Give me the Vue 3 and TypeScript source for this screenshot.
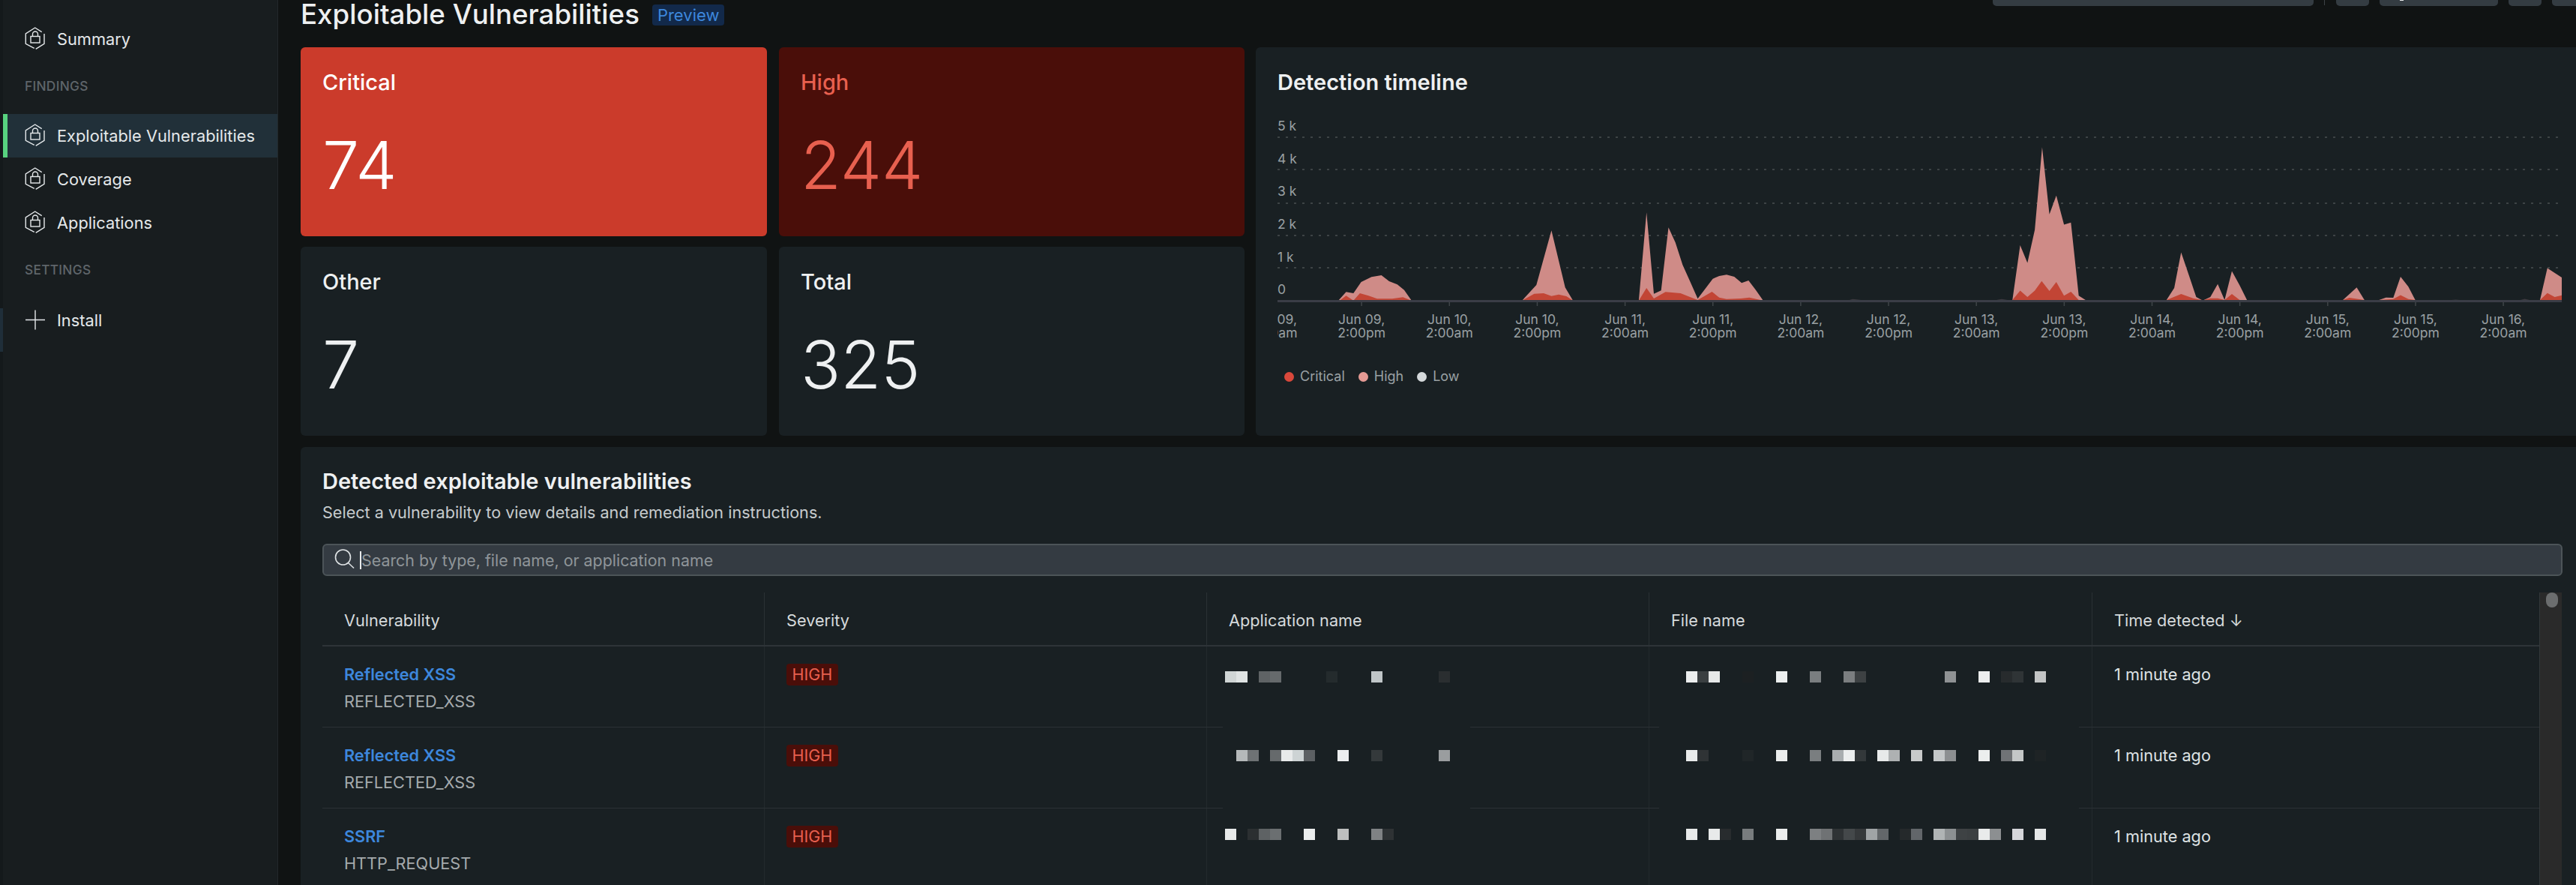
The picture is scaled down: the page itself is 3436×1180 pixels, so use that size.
<script setup lang="ts">
type Point = [number, number]
type Block = [number, string]

const navTop = ['Summary']
const navFindings = ['Exploitable Vulnerabilities', 'Coverage', 'Applications']

const stats = [
  { label: 'Critical', value: 74, tone: 'critical' },
  { label: 'High', value: 244, tone: 'high' },
  { label: 'Other', value: 7, tone: '' },
  { label: 'Total', value: 325, tone: '' },
]

const yLabels = [
  { text: '5 k', y: 174 },
  { text: '4 k', y: 218 },
  { text: '3 k', y: 261 },
  { text: '2 k', y: 305 },
  { text: '1 k', y: 349 },
  { text: '0', y: 392 },
]
const gridLines = [183, 226, 271, 314, 357]

const tickDates = [
  ['Jun 09,', '2:00am'], ['Jun 09,', '2:00pm'], ['Jun 10,', '2:00am'], ['Jun 10,', '2:00pm'],
  ['Jun 11,', '2:00am'], ['Jun 11,', '2:00pm'], ['Jun 12,', '2:00am'], ['Jun 12,', '2:00pm'],
  ['Jun 13,', '2:00am'], ['Jun 13,', '2:00pm'], ['Jun 14,', '2:00am'], ['Jun 14,', '2:00pm'],
  ['Jun 15,', '2:00am'], ['Jun 15,', '2:00pm'], ['Jun 16,', '2:00am'],
]
const ticks = tickDates.map((lines, i) => ({ lines, x: 1700 + i * 117.15 }))

// shapes were read off two crops of the chart, so each set has its own scale
const left = (pts: Point[]) => pts.map(([x, y]) => `${(1680 + x / 1.742).toFixed(1)},${(60 + y / 3).toFixed(1)}`).join(' ')
const right = (pts: Point[]) => pts.map(([x, y]) => `${(2536 + x / 1.742).toFixed(1)},${(y / 2.904).toFixed(1)}`).join(' ')

const highAreas = [
  left([[185, 1022], [203, 988], [220, 993], [238, 948], [262, 928], [285, 921], [303, 945], [322, 958], [338, 980], [355, 1022]]),
  left([[612, 1022], [645, 960], [680, 742], [712, 970], [730, 1022]]),
  left([[883, 1022], [901, 670], [918, 995], [935, 982], [952, 730], [968, 790], [985, 880], [1002, 945], [1020, 1015], [1055, 935], [1070, 924], [1087, 919], [1105, 927], [1122, 952], [1138, 942], [1155, 980], [1172, 1022]]),
  right([[260, 1162], [278, 950], [295, 1018], [312, 890], [329, 570], [346, 830], [362, 757], [380, 870], [396, 862], [414, 1145], [430, 1162]]),
  right([[618, 1162], [636, 1115], [652, 977], [670, 1065], [687, 1150], [700, 1162]]),
  right([[705, 1162], [720, 1150], [737, 1100], [753, 1162], [770, 1050], [788, 1105], [805, 1162]]),
  right([[1028, 1162], [1060, 1113], [1078, 1162]]),
  right([[1112, 1162], [1128, 1152], [1145, 1153], [1162, 1072], [1180, 1110], [1196, 1162]]),
  right([[1486, 1162], [1503, 1038], [1537, 1075], [1537, 1162]]),
]
const criticalAreas = [
  left([[188, 1022], [203, 1003], [220, 1022], [235, 993], [255, 1003], [275, 1015], [310, 1015], [335, 1009], [355, 1022]]),
  left([[612, 1022], [640, 995], [662, 993], [680, 1004], [697, 998], [715, 1005], [730, 1022]]),
  left([[883, 1022], [901, 972], [918, 1014], [945, 988], [980, 993], [1002, 1008], [1020, 1020], [1053, 987], [1070, 1010], [1087, 1016], [1120, 1014], [1140, 1010], [1172, 1022]]),
  right([[260, 1162], [278, 1125], [295, 1150], [312, 1125], [328, 1088], [346, 1127], [362, 1092], [380, 1145], [396, 1130], [414, 1162]]),
  right([[618, 1162], [652, 1138], [680, 1155], [700, 1162]]),
  right([[705, 1162], [720, 1155], [737, 1155], [753, 1162], [770, 1138], [788, 1162]]),
  right([[1028, 1162], [1043, 1153], [1078, 1162]]),
  right([[1112, 1162], [1145, 1158], [1162, 1143], [1180, 1158], [1196, 1162]]),
  right([[1486, 1162], [1503, 1135], [1520, 1150], [1537, 1143], [1537, 1162]]),
]
const lowAreas = [
  left([[1365, 1024], [1380, 1016], [1420, 1024]]),
  right([[215, 1164], [235, 1158], [258, 1164]]),
  right([[1265, 1164], [1290, 1160], [1315, 1164]]),
  right([[1436, 1164], [1450, 1157], [1468, 1164]]),
]

const legend = [
  { label: 'Critical', color: '#d9483b' },
  { label: 'High', color: '#e59a94' },
  { label: 'Low', color: '#d5d9db' },
]

const columns = ['Vulnerability', 'Severity', 'Application name', 'File name', 'Time detected ↓']

const rows: { name: string; type: string; top: number; app: Block[]; file: Block[] }[] = [
  {
    name: 'Reflected XSS',
    type: 'REFLECTED_XSS',
    top: 33,
    app: [[0, '#d0d5d5'], [1, '#dfe3e3'], [3, '#5f6365'], [4, '#666a6c'], [9, '#242b2d'], [13, '#c0c6c8'], [19, '#2a2e30']],
    file: [[0, '#eceeee'], [1, '#3a3f41'], [2, '#e6e8e8'], [5, '#1c2022'], [8, '#ecefef'], [11, '#7a7e80'], [14, '#7b7e80'], [15, '#3d4143'], [23, '#8f9294'], [26, '#eceeee'], [28, '#272b2d'], [29, '#2f3436'], [31, '#c3c5c5']],
  },
  {
    name: 'Reflected XSS',
    type: 'REFLECTED_XSS',
    top: 30,
    app: [[1, '#b5b9ba'], [2, '#6e7274'], [4, '#666a6c'], [5, '#e8eaea'], [6, '#cdd3d4'], [7, '#5c6063'], [10, '#eceeef'], [13, '#34393b'], [19, '#9a9d9f']],
    file: [[0, '#e9ebeb'], [1, '#2f3335'], [5, '#202628'], [8, '#ebeded'], [11, '#7a7e80'], [13, '#a9adaf'], [14, '#eceeee'], [15, '#33383a'], [17, '#e8eaea'], [18, '#aeb1b2'], [20, '#c8caca'], [22, '#c4c7c8'], [23, '#8c8f91'], [26, '#eceeee'], [28, '#707376'], [29, '#c4c7c7'], [31, '#1e2325']],
  },
  {
    name: 'SSRF',
    type: 'HTTP_REQUEST',
    top: 27,
    app: [[0, '#e8eaea'], [2, '#2b2f31'], [3, '#5e6264'], [4, '#6b6f71'], [7, '#ebeded'], [10, '#bdbfbf'], [13, '#7f8284'], [14, '#2e3234']],
    file: [[0, '#e8eaea'], [2, '#e8eaea'], [3, '#282c2e'], [5, '#787c7e'], [8, '#ebeded'], [11, '#7d8082'], [12, '#6f7274'], [13, '#2f3335'], [14, '#44484a'], [15, '#36393b'], [16, '#a0a4a6'], [17, '#63676a'], [19, '#25292b'], [20, '#62666a'], [22, '#b0b4b5'], [23, '#8c9092'], [24, '#3e4244'], [25, '#3c4042'], [26, '#e9ebeb'], [27, '#8c8f91'], [29, '#d5d6da'], [31, '#e5e7e7']],
  },
]
</script>

<template>
  <div class="page">
    <div class="rail"><span class="rail-mark"></span></div>

    <aside class="sidebar">
      <a v-for="item in navTop" :key="item" class="nav-item">
        <svg class="nav-icon" viewBox="0 0 28 32" fill="none" stroke="currentColor" stroke-width="1.4">
          <path d="M22.7 6.7 13.7 1 1.3 9v13.3l11.4 6M14.7 29.3 26 22.3V9" />
          <rect x="8" y="12.5" width="12" height="8.5" />
          <path d="M10.5 12.5V9.5a3.5 3.5 0 0 1 7 0v3" />
        </svg>
        {{ item }}
      </a>
      <div class="nav-label">FINDINGS</div>
      <a
        v-for="(item, i) in navFindings"
        :key="item"
        class="nav-item"
        :class="{ active: i === 0 }"
      >
        <svg class="nav-icon" viewBox="0 0 28 32" fill="none" stroke="currentColor" stroke-width="1.4">
          <path d="M22.7 6.7 13.7 1 1.3 9v13.3l11.4 6M14.7 29.3 26 22.3V9" />
          <rect x="8" y="12.5" width="12" height="8.5" />
          <path d="M10.5 12.5V9.5a3.5 3.5 0 0 1 7 0v3" />
        </svg>
        {{ item }}
      </a>
      <div class="nav-label settings">SETTINGS</div>
      <a class="nav-item">
        <svg class="nav-icon" viewBox="0 0 28 32" fill="none" stroke="currentColor" stroke-width="1.4">
          <path d="M14 2.5v26M1 15.5h26" />
        </svg>
        Install
      </a>
    </aside>

    <main class="main">
      <header class="top">
        <div class="title-row">
          <h1>Exploitable Vulnerabilities</h1>
          <span class="preview">Preview</span>
        </div>
        <div class="controls">
          <span class="ctl select"></span>
          <span class="ctl-sep"></span>
          <span class="ctl small"></span>
          <span class="ctl wide"><i></i></span>
          <span class="ctl small"></span>
          <span class="ctl small"></span>
        </div>
      </header>

      <section class="overview">
        <div v-for="stat in stats" :key="stat.label" class="card stat" :class="stat.tone">
          <div class="stat-label">{{ stat.label }}</div>
          <div class="stat-value">{{ stat.value }}</div>
        </div>

        <div class="card timeline">
          <h2>Detection timeline</h2>
          <svg class="chart" viewBox="1705 150 1713 310" width="1713" height="310">
            <text v-for="l in yLabels" :key="l.text" class="axis" x="1705" :y="l.y">{{ l.text }}</text>
            <line
              v-for="y in gridLines"
              :key="y"
              class="grid-line"
              x1="1705"
              x2="3415"
              :y1="y"
              :y2="y"
            />
            <polygon v-for="p in lowAreas" :key="p" :points="p" fill="#3d3a40" />
            <polygon v-for="p in highAreas" :key="p" :points="p" fill="#cf8b87" />
            <polygon v-for="p in criticalAreas" :key="p" :points="p" fill="#c24535" />
            <rect x="1705" y="400" width="1713" height="3" fill="#3a3d46" />
            <g v-for="t in ticks" :key="t.x">
              <line :x1="t.x" :x2="t.x" y1="403" y2="408" stroke="#3f4548" stroke-width="1.5" />
              <text class="axis" text-anchor="middle" :x="t.x" y="432">{{ t.lines[0] }}</text>
              <text class="axis" text-anchor="middle" :x="t.x" y="450">{{ t.lines[1] }}</text>
            </g>
          </svg>
          <div class="legend">
            <span v-for="l in legend" :key="l.label" class="legend-item">
              <i :style="{ background: l.color }"></i>{{ l.label }}
            </span>
          </div>
        </div>
      </section>

      <section class="card findings">
        <h2>Detected exploitable vulnerabilities</h2>
        <p class="hint">Select a vulnerability to view details and remediation instructions.</p>
        <div class="search">
          <svg class="search-icon" viewBox="0 0 30 30" fill="none" stroke="currentColor" stroke-width="1.6">
            <circle cx="11.5" cy="11" r="10" />
            <path d="M18.5 18.5 26 25.5" />
          </svg>
          <span class="caret"></span>
          <span class="placeholder">Search by type, file name, or application name</span>
        </div>

        <div class="table-wrap">
          <div class="table">
            <div class="row head">
              <div v-for="col in columns" :key="col" class="cell">{{ col }}</div>
            </div>
            <div v-for="(row, i) in rows" :key="i" class="row">
              <div class="cell">
                <a class="vuln">{{ row.name }}</a>
                <div class="vuln-type">{{ row.type }}</div>
              </div>
              <div class="cell"><span class="badge">HIGH</span></div>
              <div class="cell">
                <div class="censor app" :style="{ paddingTop: row.top + 'px' }">
                  <div class="blocks">
                    <i
                      v-for="b in row.app"
                      :key="b[0]"
                      :style="{ gridColumn: b[0] + 1, background: b[1] }"
                    ></i>
                  </div>
                </div>
              </div>
              <div class="cell">
                <div class="censor file" :style="{ paddingTop: row.top + 'px' }">
                  <div class="blocks">
                    <i
                      v-for="b in row.file"
                      :key="b[0]"
                      :style="{ gridColumn: b[0] + 1, background: b[1] }"
                    ></i>
                  </div>
                </div>
              </div>
              <div class="cell time">1 minute ago</div>
            </div>
          </div>
          <div class="scrollbar"><span class="thumb"></span></div>
        </div>
      </section>
    </main>
  </div>
</template>

<style scoped>
.page {
  width: 3436px;
  height: 1180px;
  display: flex;
  overflow: hidden;
  background: #101313;
  color: #e9ecee;
  font-family: Inter, "Noto Sans", sans-serif;
}

.rail {
  width: 4px;
  flex: none;
  background: #14191b;
  padding-top: 411px;
}

.rail-mark {
  display: block;
  height: 58px;
  background: #1f2e39;
}

.sidebar {
  width: 367px;
  flex: none;
  box-sizing: border-box;
  padding-top: 23px;
  background: #181d1f;
  border-right: 1px solid #22282b;
}

.nav-item {
  height: 58px;
  display: flex;
  align-items: center;
  gap: 15px;
  padding-left: 29px;
  font-size: 21.8px;
  color: #e4e8ea;
}

.nav-item.active {
  background: #213039;
  box-shadow: inset 6px 0 0 #58d27f;
}

.nav-icon {
  width: 28px;
  height: 32px;
  flex: none;
}

.nav-label {
  height: 71px;
  box-sizing: border-box;
  padding: 24px 0 0 29px;
  font-size: 17.3px;
  line-height: 20px;
  font-weight: 500;
  letter-spacing: 0.3px;
  color: #5f656a;
}

.nav-label.settings {
  height: 72px;
}

.main {
  flex: 1;
  min-width: 0;
  padding-left: 30px;
}

.top {
  height: 63px;
  display: flex;
  justify-content: space-between;
  align-items: flex-start;
}

.title-row {
  display: flex;
  align-items: center;
  gap: 17px;
  height: 38px;
}

h1 {
  margin: 0;
  font-size: 36.7px;
  line-height: 38px;
  font-weight: 500;
  color: #eef0f1;
}

.preview {
  height: 28px;
  padding: 0 7px;
  margin-top: 2px;
  border-radius: 4px;
  background: #12294a;
  color: #3d87dc;
  font-size: 22px;
  line-height: 28px;
}

.controls {
  display: flex;
  align-items: flex-start;
  margin-right: -12px;
}

.ctl {
  height: 8px;
  background: #343c42;
  border-radius: 0 0 5px 5px;
  position: relative;
}

.select {
  width: 428px;
}

.ctl-sep {
  width: 1px;
  height: 7px;
  margin: 0 15px 0 14px;
  background: #3d4347;
}

.small {
  width: 44px;
}

.wide {
  width: 158px;
  margin: 0 14px;
}

.wide i {
  position: absolute;
  left: 27px;
  top: 0;
  width: 5px;
  height: 1px;
  background: #e8eaeb;
}

.small:last-child {
  margin-left: 14px;
}

.overview {
  display: grid;
  grid-template-columns: 622px 622px 1fr;
  grid-template-rows: 252px 252px;
  column-gap: 15px;
  row-gap: 14px;
}

.card {
  background: #192023;
  border-radius: 6px;
}

.stat {
  padding: 30px 29px;
  box-sizing: border-box;
}

.stat:nth-child(even) {
  margin-left: 1px;
}

.stat-label {
  font-size: 29px;
  line-height: 34px;
  font-weight: 500;
  color: #eef0f1;
}

.stat-value {
  margin-top: 43px;
  font-size: 88px;
  line-height: 100px;
  font-weight: 300;
  color: #eef0f1;
}

.critical {
  background: #cb3b2b;
}

.critical .stat-label,
.critical .stat-value {
  color: #fff;
}

.high {
  background: #4a0e09;
}

.high .stat-label,
.high .stat-value {
  color: #e8604f;
}

.timeline {
  grid-column: 3;
  grid-row: 1 / span 2;
  border-radius: 6px 0 0 6px;
  padding: 30px 0 0 29px;
}

h2 {
  margin: 0;
  font-size: 29px;
  line-height: 34px;
  font-weight: 600;
  color: #eef0f1;
}

.chart {
  display: block;
  margin-top: 23px;
}

.axis {
  font-size: 17.5px;
  fill: #9aa0a3;
}

.grid-line {
  stroke: #3d4345;
  stroke-width: 2;
  stroke-dasharray: 3 8;
}

.legend {
  display: flex;
  gap: 18px;
  margin-top: 30px;
  padding-left: 9px;
  font-size: 18px;
  line-height: 24px;
  color: #9aa0a3;
}

.legend-item {
  display: flex;
  align-items: center;
  gap: 8px;
}

.legend-item i {
  width: 13px;
  height: 13px;
  border-radius: 50%;
}

.findings {
  margin-top: 15px;
  padding: 29px 18px 0 29px;
  border-radius: 6px 0 0 0;
  height: 600px;
}

.hint {
  margin: 9px 0 0;
  font-size: 21.6px;
  line-height: 30px;
  color: #c6cbcd;
}

.search {
  margin-top: 27px;
  height: 43px;
  box-sizing: border-box;
  display: flex;
  align-items: center;
  padding-left: 14px;
  background: #343b42;
  border: 2px solid #4c5458;
  border-radius: 6px;
}

.search-icon {
  width: 30px;
  height: 30px;
  flex: none;
  color: #dfe3e5;
}

.caret {
  width: 2px;
  height: 24px;
  margin-left: 4px;
  background: #e8eaeb;
}

.placeholder {
  font-size: 21.4px;
  color: #8f9599;
}

.table-wrap {
  display: flex;
  margin-top: 22px;
}

.table {
  width: 2957px;
  flex: none;
}

.row {
  display: grid;
  grid-template-columns: 589px 590px 590px 591px 597px;
  height: 107px;
  border-bottom: 1px solid #2b3135;
}

.row.head {
  height: 70px;
  border-bottom: 2px solid #2e3438;
  color: #d6dadc;
}

.cell {
  position: relative;
  box-sizing: border-box;
  padding: 25px 0 0 29px;
  border-left: 1px solid #232a2d;
  font-size: 21.7px;
  line-height: 24px;
}

.cell:first-child {
  border-left: 0;
  padding-left: 29px;
}

.row.head .cell {
  border-left-color: #2a3134;
}

.vuln {
  display: block;
  font-weight: 600;
  color: #3d87dc;
}

.vuln-type {
  margin-top: 12px;
  color: #a5aaad;
}

.badge {
  display: inline-block;
  height: 29px;
  margin-top: -2px;
  padding: 0 7.5px;
  border-radius: 4px;
  background: #4a0e09;
  color: #e8604f;
  font-size: 21.5px;
  line-height: 29px;
}

.time {
  color: #dfe3e5;
}

.censor {
  position: absolute;
  top: 0;
  bottom: -1px;
  box-sizing: border-box;
  background: #192023;
}

.censor.app {
  left: 21px;
  width: 330px;
  padding-left: 3px;
}

.censor.file {
  left: 13px;
  width: 560px;
  padding-left: 36px;
}

.blocks {
  display: grid;
  grid-template-columns: repeat(32, 15px);
  height: 15px;
}

.blocks i {
  grid-row: 1;
  height: 15px;
}

.scrollbar {
  width: 30px;
  flex: none;
  box-sizing: border-box;
  padding-left: 8px;
  background: #2a2a2a;
  border-left: 1px solid #33383a;
  height: 400px;
}

.thumb {
  display: block;
  width: 16px;
  height: 20px;
  border-radius: 8px;
  background: #6b6d6e;
}
</style>

<style>
body {
  margin: 0;
  overflow: hidden;
}
</style>
